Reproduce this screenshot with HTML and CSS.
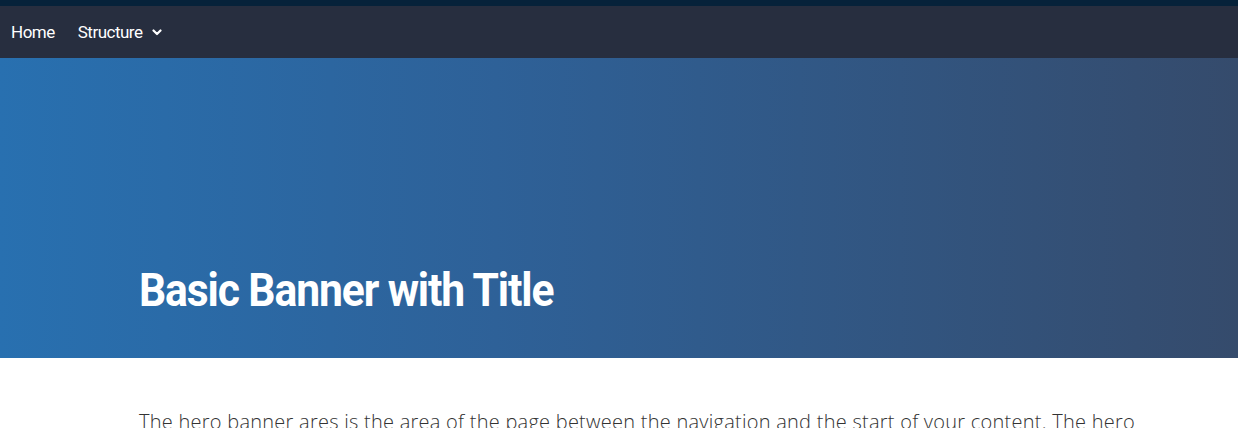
FILE: index.html
```html
<!DOCTYPE html>
<html>
<head>
<meta charset="utf-8">
<link rel="stylesheet" href="styles.css">
</head>
<body>
<div class="topstrip"></div>
<nav class="nav">
  <a class="nav-item" href="#">Home</a>
  <a class="nav-item" href="#">Structure
    <svg class="chev" width="10" height="7" viewBox="0 0 10 7"><path d="M1.5 1.5 L5 5 L8.5 1.5" fill="none" stroke="#fff" stroke-width="2.2" stroke-linecap="round" stroke-linejoin="round"/></svg>
  </a>
</nav>
<header class="hero">
  <h1 class="hero-title">Basic Banner with Title</h1>
</header>
<main class="content">
  <p class="lead">The hero banner ares is the area of the page between the navigation and the start of your content. The hero banner is used to introduce the page and set the tone for the content that follows.</p>
</main>
</body>
</html>
```

FILE: styles.css
```css
html, body { margin: 0; padding: 0; background: #fff; }
body { font-family: Roboto, "Liberation Sans", sans-serif; overflow: hidden; height: 428px; }
.topstrip { height: 6px; background: #06223a; }
.nav {
  height: 52px;
  background: #272e3f;
  display: flex;
  align-items: center;
  padding-left: 11px;
  gap: 23px;
}
.nav-item {
  color: #fff;
  text-decoration: none;
  font-family: Roboto, sans-serif;
  font-size: 17px;
  letter-spacing: -0.5px;
  display: flex;
  align-items: center;
  gap: 9px;
}
.chev { margin-top: 1px; }
.hero {
  height: 300px;
  background: linear-gradient(90deg, #2870b0 0%, #2e6198 40%, #354b6c 100%);
  display: flex;
  align-items: flex-end;
  padding-left: 139px;
  box-sizing: border-box;
  padding-bottom: 45px;
}
.hero-title {
  margin: 0;
  color: #fff;
  font-family: Roboto, sans-serif;
  font-weight: 700;
  font-size: 46px;
  line-height: 1;
  letter-spacing: -1.2px;
  transform: scaleX(0.927);
  transform-origin: left center;
}
.content { padding: 49px 0 0 139px; width: 1010px; }
.lead {
  margin: 0;
  font-family: "Open Sans", sans-serif;
  font-weight: 300;
  font-size: 20px;
  line-height: 1.5;
  letter-spacing: 0.25px;
  color: #333;
}
```
